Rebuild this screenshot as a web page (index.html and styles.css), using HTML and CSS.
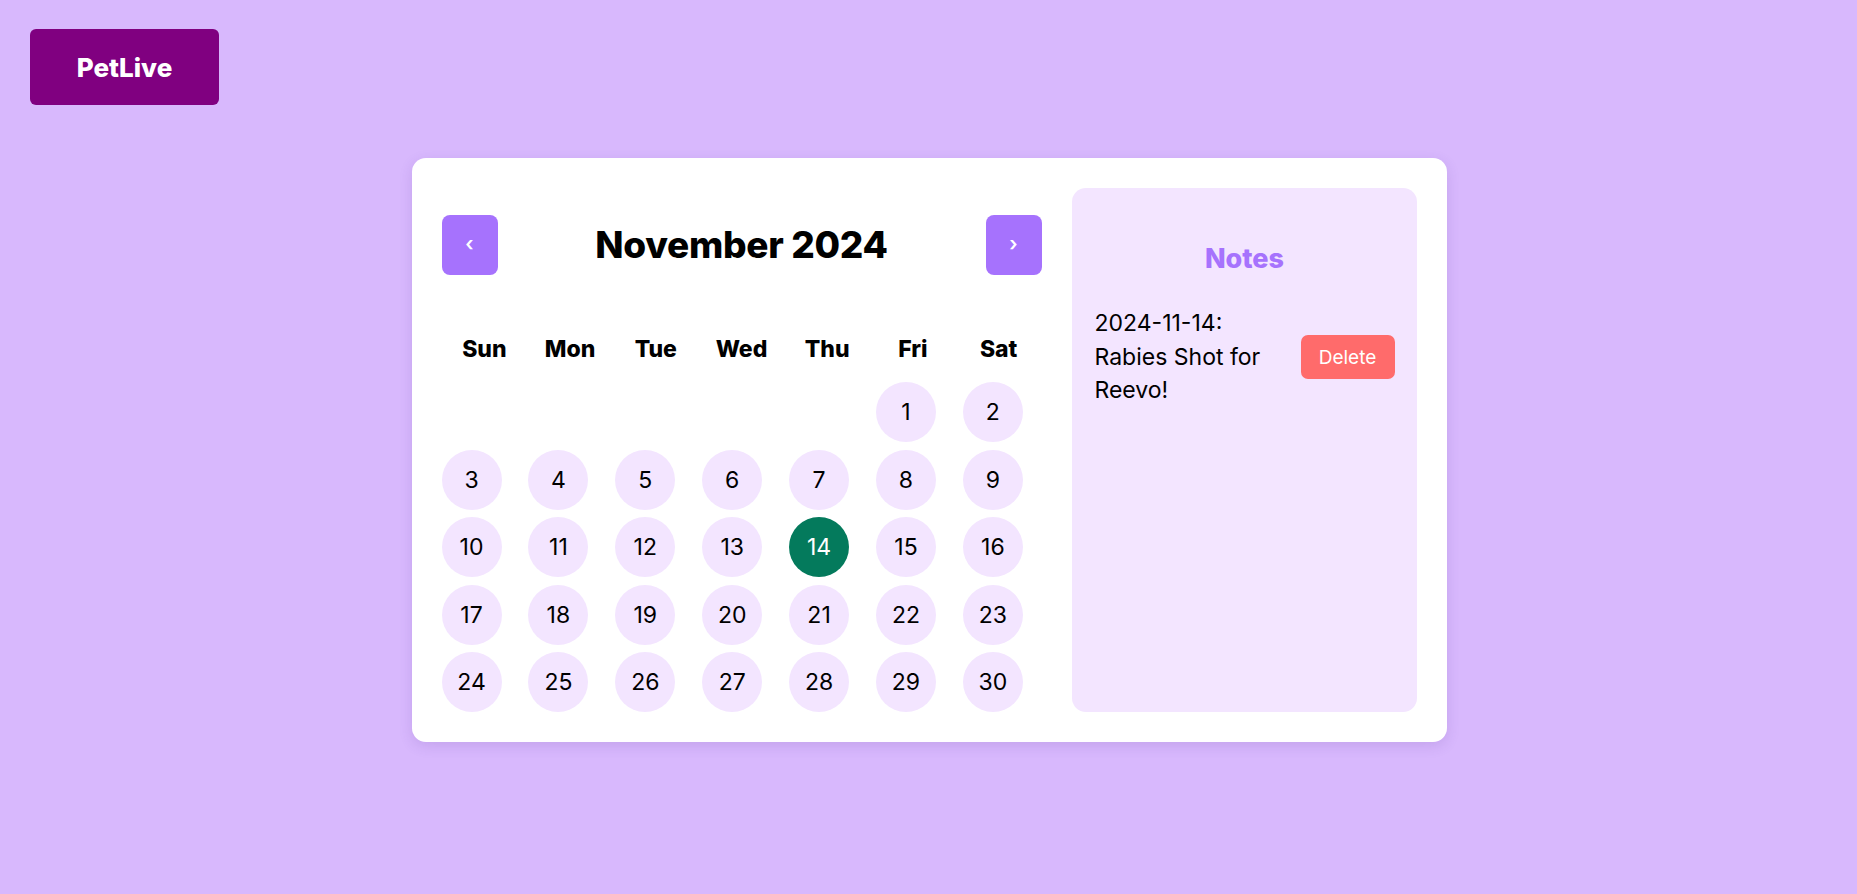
FILE: index.html
```html
<!DOCTYPE html>
<html lang="en">
<head>
<meta charset="utf-8">
<title>PetLive Calendar</title>
<link rel="stylesheet" href="styles.css">
</head>
<body>
<header class="topbar">
  <a class="brand" href="#">PetLive</a>
</header>
<main class="page">
  <section class="card">
    <div class="calendar">
      <div class="cal-header">
        <button class="nav-btn" type="button">&lsaquo;</button>
        <h2 class="cal-title">November 2024</h2>
        <button class="nav-btn" type="button">&rsaquo;</button>
      </div>
      <div class="weekdays">
        <span>Sun</span><span>Mon</span><span>Tue</span><span>Wed</span><span>Thu</span><span>Fri</span><span>Sat</span>
      </div>
      <div class="days">
        <span class="blank"></span><span class="blank"></span><span class="blank"></span><span class="blank"></span><span class="blank"></span>
        <span class="day">1</span><span class="day">2</span>
        <span class="day">3</span><span class="day">4</span><span class="day">5</span><span class="day">6</span><span class="day">7</span><span class="day">8</span><span class="day">9</span>
        <span class="day">10</span><span class="day">11</span><span class="day">12</span><span class="day">13</span><span class="day selected">14</span><span class="day">15</span><span class="day">16</span>
        <span class="day">17</span><span class="day">18</span><span class="day">19</span><span class="day">20</span><span class="day">21</span><span class="day">22</span><span class="day">23</span>
        <span class="day">24</span><span class="day">25</span><span class="day">26</span><span class="day">27</span><span class="day">28</span><span class="day">29</span><span class="day">30</span>
      </div>
    </div>
    <aside class="notes">
      <h2 class="notes-title">Notes</h2>
      <ul class="note-list">
        <li class="note">
          <span class="note-text">2024-11-14: Rabies Shot for Reevo!</span>
          <button class="delete-btn" type="button">Delete</button>
        </li>
      </ul>
    </aside>
  </section>
</main>
</body>
</html>
```
FILE: styles.css
```css
* { box-sizing: border-box; }

body {
  margin: 0;
  background: #d8b8fd;
  font-family: "Inter", "Open Sans", sans-serif;
  color: #000;
  min-height: 894px;
}

.topbar {
  padding: 29px 30px 0;
}

.brand {
  display: inline-flex;
  align-items: center;
  justify-content: center;
  width: 189px;
  height: 76px;
  background: #800080;
  color: #fff;
  border-radius: 6px;
  font-weight: 800;
  font-size: 26px;
  text-decoration: none;
}

.page {
  padding-top: 53px;
  padding-left: 1px;
}

.card {
  width: 1035px;
  margin: 0 auto;
  padding: 30px;
  display: flex;
  gap: 30px;
  background: #fff;
  border-radius: 14px;
  box-shadow: 0 4px 14px rgba(80, 40, 140, 0.14);
}

.calendar {
  width: 600px;
  flex: none;
}

.cal-header {
  margin-top: 27px;
  height: 60px;
  display: flex;
  align-items: center;
  justify-content: space-between;
}

.nav-btn {
  width: 56px;
  height: 60px;
  border: none;
  border-radius: 8px;
  background: #a672fd;
  color: #fff;
  font-family: inherit;
  font-size: 20px;
  font-weight: 600;
  padding: 0 0 3px;
}

.cal-title {
  margin: 0;
  font-size: 37px;
  font-weight: 800;
  line-height: 1.2;
  letter-spacing: -0.3px;
}

.weekdays {
  margin-top: 59px;
  display: grid;
  grid-template-columns: repeat(7, 1fr);
  font-size: 23px;
  font-weight: 800;
  line-height: 30px;
  text-align: center;
}

.days {
  margin-top: 18px;
  display: grid;
  grid-template-columns: repeat(7, 60px);
  column-gap: 26.9px;
  row-gap: 7.5px;
}

.day {
  width: 60px;
  height: 60px;
  border-radius: 50%;
  background: #f3e5ff;
  display: flex;
  align-items: center;
  justify-content: center;
  font-size: 23px;
}

.day.selected {
  background: #047a5c;
  color: #fff;
}

.notes {
  flex: 1;
  background: #f3e5ff;
  border-radius: 14px;
  padding: 20px 22px 20px 23px;
}

.notes-title {
  margin: 34px 0 0;
  text-align: center;
  font-size: 27px;
  line-height: 33px;
  font-weight: 800;
  color: #a672fd;
}

.note-list {
  list-style: none;
  margin: 32px 0 0;
  padding: 0;
}

.note {
  display: flex;
  align-items: center;
  justify-content: space-between;
}

.note-text {
  width: 190px;
  font-size: 23px;
  line-height: 33.6px;
}

.delete-btn {
  height: 44px;
  width: 94px;
  border: none;
  border-radius: 7px;
  background: #ff6b6b;
  color: #fff;
  font-family: inherit;
  font-size: 19px;
}
```
